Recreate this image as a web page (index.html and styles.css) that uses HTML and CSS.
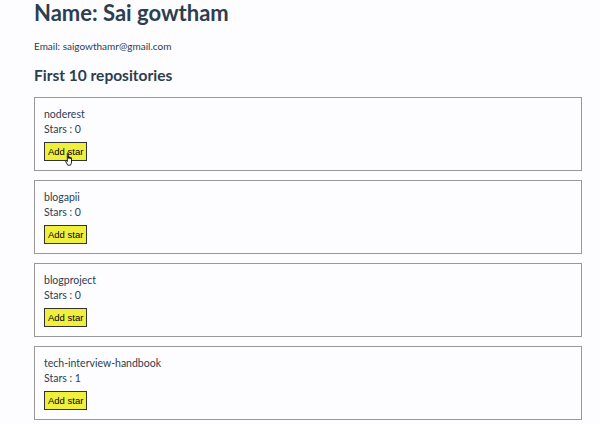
FILE: index.html
```html
<!DOCTYPE html>
<html>
<head>
<meta charset="utf-8">
<link rel="stylesheet" href="styles.css">
</head>
<body>
<div class="page">
  <h1 class="name">Name: Sai gowtham</h1>
  <p class="email">Email: saigowthamr@gmail.com</p>
  <h2 class="subtitle">First 10 repositories</h2>
  <div class="repos">
    <div class="repo">
      <div class="repo-name">noderest</div>
      <div class="repo-stars">Stars : 0</div>
      <div class="btn-wrap">
        <button class="star-btn">Add star</button>
        <svg class="cursor" width="12" height="15" viewBox="0 0 11 14">
          <path d="M3 1.2c0-.6.9-.6.9 0V6l.1-1.2c0-.6.9-.6.9 0V6l.1-.9c0-.6.9-.6.9 0V6.3l.1-.6c0-.6.9-.6.9 0v3.6c0 1.4-.6 2.3-1 3H3.4L1.3 8.6c-.4-.6.3-1.2.8-.7L3 8.9z" fill="#fff" stroke="#000" stroke-width="0.8" stroke-linejoin="round"/>
        </svg>
      </div>
    </div>
    <div class="repo">
      <div class="repo-name">blogapii</div>
      <div class="repo-stars">Stars : 0</div>
      <button class="star-btn">Add star</button>
    </div>
    <div class="repo">
      <div class="repo-name">blogproject</div>
      <div class="repo-stars">Stars : 0</div>
      <button class="star-btn">Add star</button>
    </div>
    <div class="repo">
      <div class="repo-name">tech-interview-handbook</div>
      <div class="repo-stars">Stars : 1</div>
      <button class="star-btn">Add star</button>
    </div>
  </div>
</div>
</body>
</html>
```
FILE: styles.css
```css
html, body {
  margin: 0;
  padding: 0;
  background: #fdfcfe;
}
body {
  font-family: Lato, "Noto Sans", sans-serif;
  color: #2c3e50;
}
.page {
  padding: 0 18px 0 34px;
}
.name {
  margin: 0;
  font-size: 22px;
  line-height: 26px;
  font-weight: 700;
}
.email {
  margin: 13px 0 0;
  font-size: 10px;
  line-height: 14px;
}
.subtitle {
  margin: 12px 0 0;
  font-size: 15.5px;
  line-height: 20px;
  font-weight: 700;
}
.repos {
  margin-top: 12px;
  display: flex;
  flex-direction: column;
  gap: 9px;
}
.repo {
  border: 1px solid #999;
  height: 74px;
  box-sizing: border-box;
  padding: 9px 9px 0;
  font-size: 10.5px;
  line-height: 15px;
}
.btn-wrap {
  position: relative;
  width: max-content;
}
.star-btn {
  display: block;
  margin-top: 5px;
  height: 19px;
  padding: 0 3px;
  background: #f0f03c;
  border: 1px solid #333;
  font-family: "Liberation Sans", Arial, sans-serif;
  font-size: 9.5px;
  color: #000;
}
.cursor {
  position: absolute;
  left: 20px;
  top: 10px;
}
```
